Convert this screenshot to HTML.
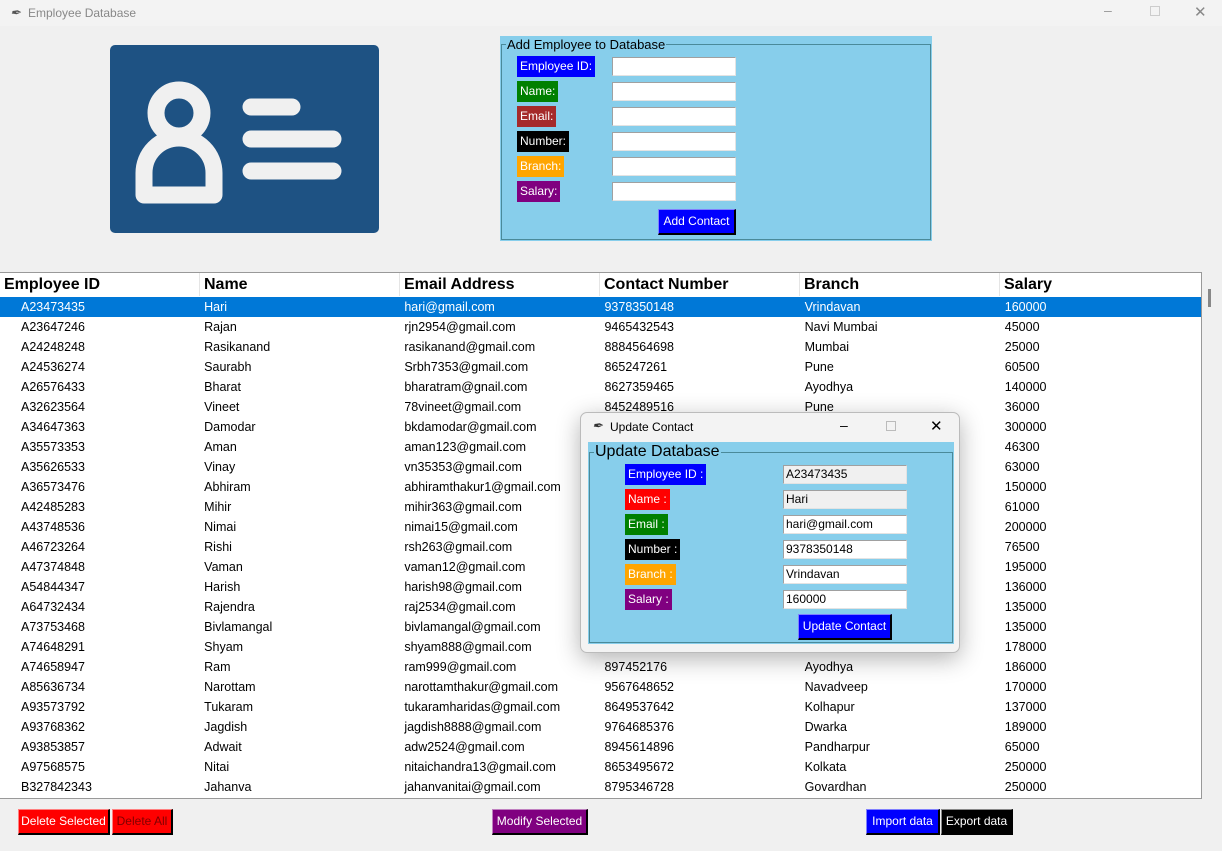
<!DOCTYPE html>
<html><head><meta charset="utf-8"><style>
*{margin:0;padding:0;box-sizing:border-box}
body{width:1222px;height:851px;background:#f0f0f0;font-family:"Liberation Sans",sans-serif;position:relative;overflow:hidden}
.a{position:absolute}
.lbl{position:absolute;color:#fff;font-size:12px;line-height:20px;padding:0 3px;height:21px}
.ent{position:absolute;background:#fff;border:1px solid #a0a0a0;border-right-color:#e3e3e3;border-bottom-color:#e3e3e3;height:19px;font-size:12px;line-height:17px;padding-left:2px}
.btn{position:absolute;color:#fff;font-size:12px;text-align:center;border:1px solid #000;border-top-color:#8080ff;border-left-color:#8080ff;border-right-width:2px;border-bottom-width:2px}
table{border-collapse:collapse;font-size:12.5px}
td{height:20px;padding:0 0 0 4px;width:200px;white-space:nowrap}
td:first-child{padding-left:21px}
tr.sel td{background:#0078d7;color:#fff}
</style></head><body>
<div class="a" style="left:0;top:0;width:1222px;height:26px;background:#f3f3f3"></div>
<div class="a" style="left:10px;top:5px;font-size:13px;color:#555;font-style:italic">&#x2712;</div>
<div class="a" style="left:28px;top:6px;font-size:12px;color:#888">Employee Database</div>
<div class="a" style="left:1104px;top:2px;font-size:14px;color:#999">&#x2013;</div>
<div class="a" style="left:1150px;top:6px;width:10px;height:10px;border:1px solid #ccc"></div>
<div class="a" style="left:1194px;top:3px;font-size:15px;color:#888">&#x2715;</div>

<div class="a" style="left:110px;top:45px;width:269px;height:188px;background:#1e5283;border-radius:5px">
<svg width="269" height="188" viewBox="0 0 269 188">
<circle cx="69" cy="68" r="23" fill="none" stroke="#f0f0f0" stroke-width="17"/>
<path d="M34 150 V128 a35 35 0 0 1 70 0 V150 Z" fill="none" stroke="#f0f0f0" stroke-width="17" stroke-linejoin="round"/>
<line x1="141" y1="62" x2="182" y2="62" stroke="#f0f0f0" stroke-width="17" stroke-linecap="round"/>
<line x1="141" y1="94" x2="223" y2="94" stroke="#f0f0f0" stroke-width="17" stroke-linecap="round"/>
<line x1="141" y1="126" x2="223" y2="126" stroke="#f0f0f0" stroke-width="17" stroke-linecap="round"/>
</svg></div>

<div class="a" style="left:500px;top:36px;width:432px;height:205px;background:#87ceeb"></div>
<div class="a" style="left:501px;top:44px;width:430px;height:196px;border:1px solid #4a8a9a"></div>
<div class="a" style="left:506px;top:37px;font-size:13px;background:#87ceeb;padding:0 1px">Add Employee to Database</div>
<div class="lbl" style="left:517px;top:56px;background:#0000ff">Employee ID:</div>
<div class="lbl" style="left:517px;top:81px;background:#008000">Name:</div>
<div class="lbl" style="left:517px;top:106px;background:#a52a2a">Email:</div>
<div class="lbl" style="left:517px;top:131px;background:#000">Number:</div>
<div class="lbl" style="left:517px;top:156px;background:#ffa500">Branch:</div>
<div class="lbl" style="left:517px;top:181px;background:#800080">Salary:</div>
<div class="ent" style="left:612px;top:57px;width:124px"></div>
<div class="ent" style="left:612px;top:82px;width:124px"></div>
<div class="ent" style="left:612px;top:107px;width:124px"></div>
<div class="ent" style="left:612px;top:132px;width:124px"></div>
<div class="ent" style="left:612px;top:157px;width:124px"></div>
<div class="ent" style="left:612px;top:182px;width:124px"></div>
<div class="btn" style="left:658px;top:209px;width:78px;height:26px;line-height:23px;background:#0000ff">Add Contact</div>

<div class="a" style="left:0;top:272px;width:1202px;height:527px;background:#fff;border-top:1px solid #999;border-right:1px solid #999;border-bottom:1px solid #999"></div>
<div class="a" style="left:1208px;top:289px;width:3px;height:18px;background:#888"></div>
<div class="a" style="left:0;top:273px;font-size:16px;font-weight:bold">
<div class="a" style="left:4px;top:3px;white-space:nowrap">Employee ID</div>
<div class="a" style="left:204px;top:3px">Name</div>
<div class="a" style="left:404px;top:3px;white-space:nowrap">Email Address</div>
<div class="a" style="left:604px;top:3px;white-space:nowrap">Contact Number</div>
<div class="a" style="left:804px;top:3px">Branch</div>
<div class="a" style="left:1004px;top:3px">Salary</div>
</div>
<div class="a" style="left:199px;top:273px;width:1px;height:23px;background:#e5e5e5"></div>
<div class="a" style="left:399px;top:273px;width:1px;height:23px;background:#e5e5e5"></div>
<div class="a" style="left:599px;top:273px;width:1px;height:23px;background:#e5e5e5"></div>
<div class="a" style="left:799px;top:273px;width:1px;height:23px;background:#e5e5e5"></div>
<div class="a" style="left:999px;top:273px;width:1px;height:23px;background:#e5e5e5"></div>
<table class="a" style="left:0;top:297px;width:1201px">
<tr class="sel"><td>A23473435</td><td>Hari</td><td>hari@gmail.com</td><td>9378350148</td><td>Vrindavan</td><td>160000</td></tr>
<tr><td>A23647246</td><td>Rajan</td><td>rjn2954@gmail.com</td><td>9465432543</td><td>Navi Mumbai</td><td>45000</td></tr>
<tr><td>A24248248</td><td>Rasikanand</td><td>rasikanand@gmail.com</td><td>8884564698</td><td>Mumbai</td><td>25000</td></tr>
<tr><td>A24536274</td><td>Saurabh</td><td>Srbh7353@gmail.com</td><td>865247261</td><td>Pune</td><td>60500</td></tr>
<tr><td>A26576433</td><td>Bharat</td><td>bharatram@gnail.com</td><td>8627359465</td><td>Ayodhya</td><td>140000</td></tr>
<tr><td>A32623564</td><td>Vineet</td><td>78vineet@gmail.com</td><td>8452489516</td><td>Pune</td><td>36000</td></tr>
<tr><td>A34647363</td><td>Damodar</td><td>bkdamodar@gmail.com</td><td></td><td></td><td>300000</td></tr>
<tr><td>A35573353</td><td>Aman</td><td>aman123@gmail.com</td><td></td><td></td><td>46300</td></tr>
<tr><td>A35626533</td><td>Vinay</td><td>vn35353@gmail.com</td><td></td><td></td><td>63000</td></tr>
<tr><td>A36573476</td><td>Abhiram</td><td>abhiramthakur1@gmail.com</td><td></td><td></td><td>150000</td></tr>
<tr><td>A42485283</td><td>Mihir</td><td>mihir363@gmail.com</td><td></td><td></td><td>61000</td></tr>
<tr><td>A43748536</td><td>Nimai</td><td>nimai15@gmail.com</td><td></td><td></td><td>200000</td></tr>
<tr><td>A46723264</td><td>Rishi</td><td>rsh263@gmail.com</td><td></td><td></td><td>76500</td></tr>
<tr><td>A47374848</td><td>Vaman</td><td>vaman12@gmail.com</td><td></td><td></td><td>195000</td></tr>
<tr><td>A54844347</td><td>Harish</td><td>harish98@gmail.com</td><td></td><td></td><td>136000</td></tr>
<tr><td>A64732434</td><td>Rajendra</td><td>raj2534@gmail.com</td><td></td><td></td><td>135000</td></tr>
<tr><td>A73753468</td><td>Bivlamangal</td><td>bivlamangal@gmail.com</td><td></td><td></td><td>135000</td></tr>
<tr><td>A74648291</td><td>Shyam</td><td>shyam888@gmail.com</td><td></td><td></td><td>178000</td></tr>
<tr><td>A74658947</td><td>Ram</td><td>ram999@gmail.com</td><td>897452176</td><td>Ayodhya</td><td>186000</td></tr>
<tr><td>A85636734</td><td>Narottam</td><td>narottamthakur@gmail.com</td><td>9567648652</td><td>Navadveep</td><td>170000</td></tr>
<tr><td>A93573792</td><td>Tukaram</td><td>tukaramharidas@gmail.com</td><td>8649537642</td><td>Kolhapur</td><td>137000</td></tr>
<tr><td>A93768362</td><td>Jagdish</td><td>jagdish8888@gmail.com</td><td>9764685376</td><td>Dwarka</td><td>189000</td></tr>
<tr><td>A93853857</td><td>Adwait</td><td>adw2524@gmail.com</td><td>8945614896</td><td>Pandharpur</td><td>65000</td></tr>
<tr><td>A97568575</td><td>Nitai</td><td>nitaichandra13@gmail.com</td><td>8653495672</td><td>Kolkata</td><td>250000</td></tr>
<tr><td>B327842343</td><td>Jahanva</td><td>jahanvanitai@gmail.com</td><td>8795346728</td><td>Govardhan</td><td>250000</td></tr>
</table>

<div class="a" style="left:580px;top:412px;width:380px;height:241px;background:#f3f3f3;border:1px solid #bbb;border-radius:7px;box-shadow:0 6px 24px rgba(0,0,0,.3)"></div>
<div class="a" style="left:592px;top:418px;font-size:13px;font-style:italic;color:#333">&#x2712;</div>
<div class="a" style="left:610px;top:420px;font-size:12px">Update Contact</div>
<div class="a" style="left:840px;top:417px;font-size:14px">&#x2013;</div>
<div class="a" style="left:886px;top:421px;width:10px;height:10px;border:1px solid #bbb"></div>
<div class="a" style="left:930px;top:417px;font-size:15px">&#x2715;</div>
<div class="a" style="left:588px;top:442px;width:366px;height:202px;background:#87ceeb"></div>
<div class="a" style="left:589px;top:452px;width:364px;height:191px;border:1px solid #4a8a9a"></div>
<div class="a" style="left:594px;top:443px;font-size:16px;background:#87ceeb;padding:0 1px">Update Database</div>
<div class="lbl" style="left:625px;top:464px;background:#0000ff">Employee ID :</div>
<div class="lbl" style="left:625px;top:489px;background:#ff0000">Name :</div>
<div class="lbl" style="left:625px;top:514px;background:#008000">Email :</div>
<div class="lbl" style="left:625px;top:539px;background:#000">Number :</div>
<div class="lbl" style="left:625px;top:564px;background:#ffa500">Branch :</div>
<div class="lbl" style="left:625px;top:589px;background:#800080">Salary :</div>
<div class="ent" style="left:783px;top:465px;width:124px;background:#f0f0f0">A23473435</div>
<div class="ent" style="left:783px;top:490px;width:124px;background:#f0f0f0">Hari</div>
<div class="ent" style="left:783px;top:515px;width:124px">hari@gmail.com</div>
<div class="ent" style="left:783px;top:540px;width:124px">9378350148</div>
<div class="ent" style="left:783px;top:565px;width:124px">Vrindavan</div>
<div class="ent" style="left:783px;top:590px;width:124px">160000</div>
<div class="btn" style="left:798px;top:614px;width:94px;height:26px;line-height:23px;background:#0000ff">Update Contact</div>

<div class="btn" style="left:18px;top:809px;width:92px;height:26px;line-height:23px;background:#ff0000;border-top-color:#ff8080;border-left-color:#ff8080">Delete Selected</div>
<div class="btn" style="left:112px;top:809px;width:61px;height:26px;line-height:23px;background:#ff0000;color:#800000;border-top-color:#ff8080;border-left-color:#ff8080">Delete All</div>
<div class="btn" style="left:492px;top:809px;width:96px;height:26px;line-height:23px;background:#800080;border-top-color:#c080c0;border-left-color:#c080c0">Modify Selected</div>
<div class="btn" style="left:866px;top:809px;width:74px;height:26px;line-height:23px;background:#0000ff">Import data</div>
<div class="btn" style="left:941px;top:809px;width:72px;height:26px;line-height:23px;background:#000;border-top-color:#888;border-left-color:#888">Export data</div>
</body></html>
